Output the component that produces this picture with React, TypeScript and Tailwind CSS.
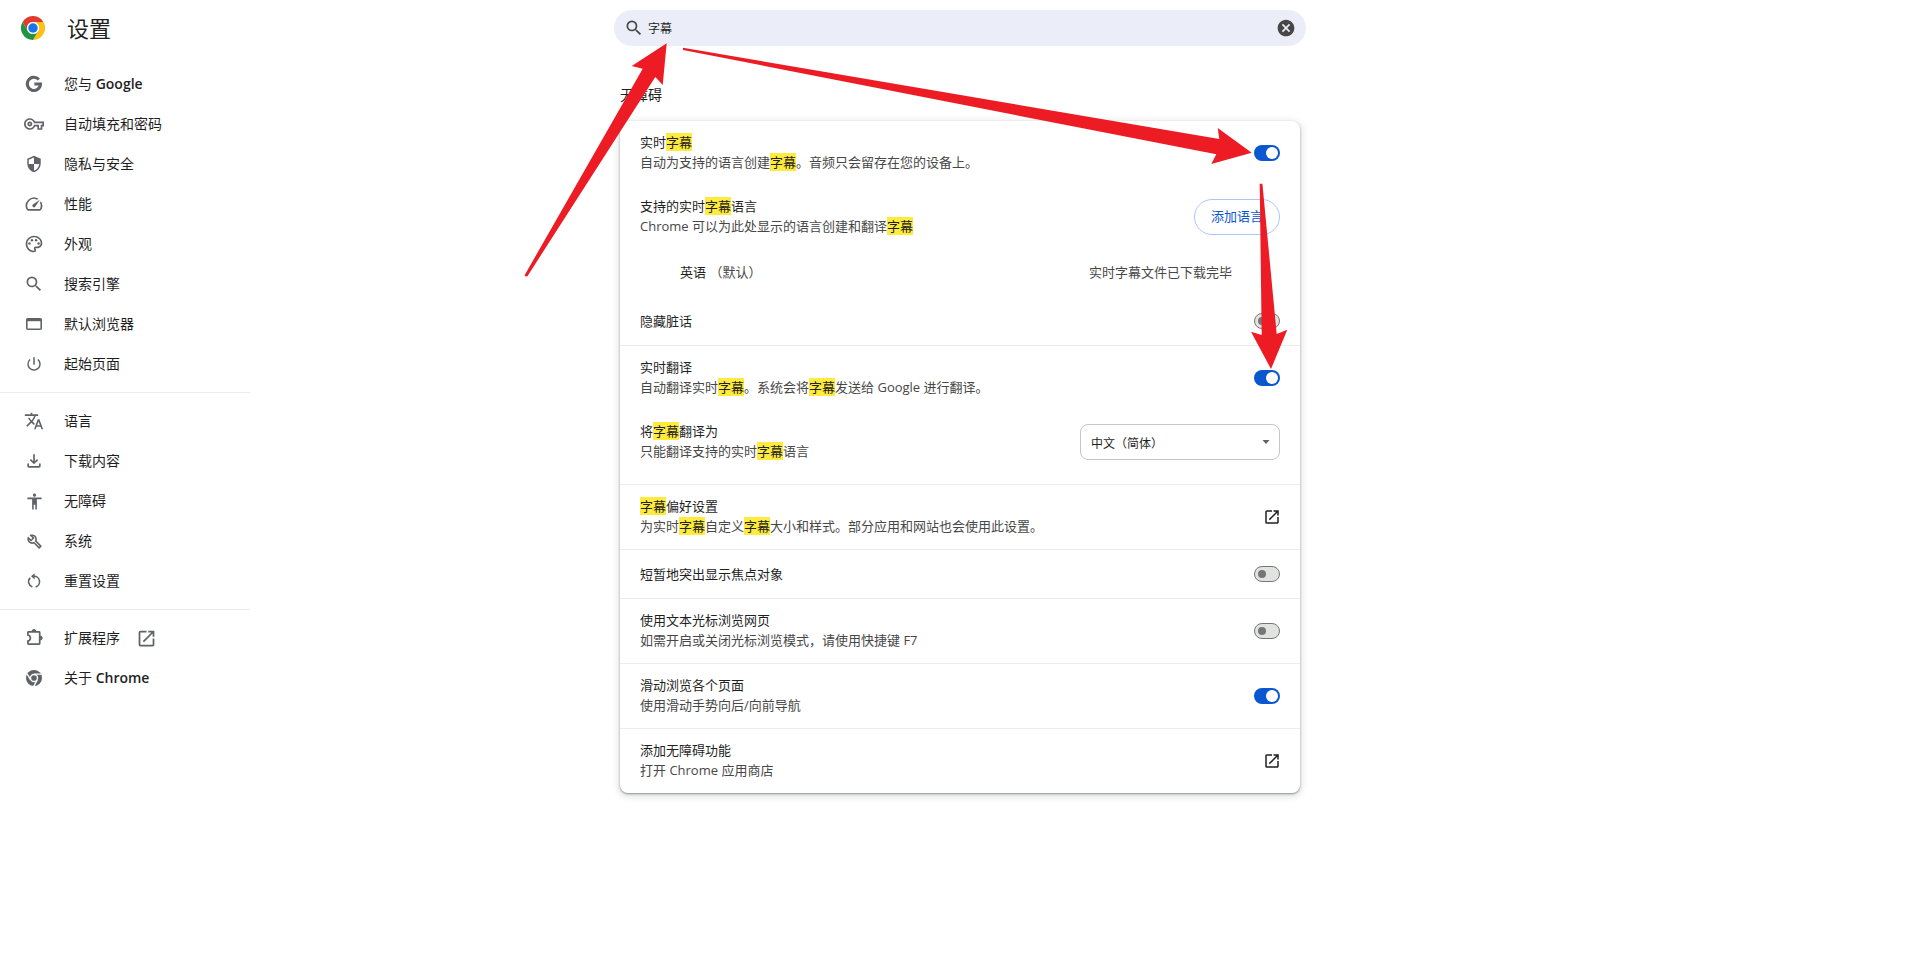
import { Fragment, useState, type ReactNode } from "react";
import {
  MdAccessibility,
  MdCancel,
  MdOpenInNew,
  MdOutlineFileDownload,
  MdOutlinePalette,
  MdOutlineSpeed,
  MdOutlineVpnKey,
  MdPowerSettingsNew,
  MdSearch,
  MdSecurity,
  MdTranslate,
} from "react-icons/md";

const QUERY = "字幕";

/** Highlights every occurrence of the search query. */
function Hit({ text }: { text: string }) {
  const parts = text.split(QUERY);
  return (
    <>
      {parts.map((part, i) => (
        <Fragment key={i}>
          {part}
          {i < parts.length - 1 && (
            <mark className="bg-[#ffeb3b] text-[#202124]">{QUERY}</mark>
          )}
        </Fragment>
      ))}
    </>
  );
}

function ChromeLogo() {
  return (
    <svg viewBox="0 0 48 48" className="size-6 shrink-0" aria-hidden="true">
      <path d="M24 12h20.8A24 24 0 0 0 3.2 12l10.4 18A12 12 0 0 1 24 12z" fill="#e33b2e" />
      <path d="M34.4 30L24 48A24 24 0 0 0 44.8 12H24a12 12 0 0 1 10.4 18z" fill="#fbc116" />
      <path d="M13.6 30L3.2 12A24 24 0 0 0 24 48l10.4-18a12 12 0 0 1-20.8 0z" fill="#229342" />
      <circle cx="24" cy="24" r="12" fill="#fff" />
      <circle cx="24" cy="24" r="9.5" fill="#1a73e8" />
    </svg>
  );
}

function GoogleIcon() {
  return (
    <svg viewBox="0 0 20 20" className="size-5" fill="none" stroke="currentColor" strokeWidth="3" aria-hidden="true">
      <path d="M14.9 5.6A6.6 6.6 0 1 0 16.5 10.1H10.4" />
    </svg>
  );
}

function WindowIcon() {
  return (
    <svg viewBox="0 0 20 20" className="size-5" aria-hidden="true">
      <rect x="2.8" y="4.8" width="14.4" height="10.4" rx="1" fill="none" stroke="currentColor" strokeWidth="1.6" />
      <path d="M2.8 4.8h14.4v2.4H2.8z" fill="currentColor" />
    </svg>
  );
}

function WrenchIcon() {
  return (
    <svg viewBox="0 -960 960 960" className="size-[19px]" fill="currentColor" aria-hidden="true">
      <path d="M686-132 444-376q-20 8-40.5 12t-43.5 4q-100 0-170-70t-70-170q0-36 10-68.5t28-61.5l146 146 72-72-146-146q29-18 61.5-28t68.5-10q100 0 170 70t70 170q0 23-4 43.5T584-516l244 242q12 12 12 29t-12 29l-84 84q-12 12-29 12t-29-12Zm29-85 27-27-256-256q18-20 26-46.5t8-53.5q0-60-38.5-104.5T386-758l74 74q12 12 12 28t-12 28L332-500q-12 12-28 12t-28-12l-74-74q9 57 53.5 95.5T360-440q26 0 53-8t47-25l255 256Z" />
    </svg>
  );
}

function ResetIcon() {
  return (
    <svg viewBox="0 0 20 20" className="size-5" aria-hidden="true">
      <path
        d="M8.4 15.9A5.4 5.4 0 0 1 6.2 6.9M11.6 15.9A5.4 5.4 0 0 0 10 5.3H8.6"
        fill="none"
        stroke="currentColor"
        strokeWidth="1.6"
      />
      <path d="M10.6 2.2v6.2L7 5.3z" fill="currentColor" />
    </svg>
  );
}

function PuzzleIcon() {
  return (
    <svg viewBox="0 0 20 20" className="size-5" aria-hidden="true">
      <path
        d="M3.9 7V4.4q0-.6.6-.6h10.6q.6 0 .6.6v11.2q0 .6-.6.6H4.5q-.6 0-.6-.6V13a3.05 3.05 0 0 0 0-6z"
        fill="none"
        stroke="currentColor"
        strokeWidth="1.7"
      />
      <path d="M8 3.4a1.9 1.9 0 0 1 3.8 0zM16.2 8a2 2 0 0 1 0 4z" fill="currentColor" stroke="currentColor" />
    </svg>
  );
}

function ChromeIcon() {
  return (
    <svg viewBox="0 0 48 48" className="size-4" aria-hidden="true">
      <circle cx="24" cy="24" r="24" fill="currentColor" />
      <path d="M24 12.5h21M34 29.7L23.5 48M14 29.7L3.4 11.5" stroke="#fff" strokeWidth="4" />
      <circle cx="24" cy="24" r="12.5" fill="#fff" />
      <circle cx="24" cy="24" r="8.5" fill="currentColor" />
    </svg>
  );
}

type NavItem = { icon: ReactNode; label: ReactNode; external?: boolean };

const latin = "font-semibold";

const navGroups: NavItem[][] = [
  [
    { icon: <GoogleIcon />, label: <>您与 <span className={latin}>Google</span></> },
    { icon: <MdOutlineVpnKey className="size-5" />, label: "自动填充和密码" },
    { icon: <MdSecurity className="size-[18px]" />, label: "隐私与安全" },
    { icon: <MdOutlineSpeed className="size-5" />, label: "性能" },
    { icon: <MdOutlinePalette className="size-5" />, label: "外观" },
    { icon: <MdSearch className="size-5" />, label: "搜索引擎" },
    { icon: <WindowIcon />, label: "默认浏览器" },
    { icon: <MdPowerSettingsNew className="size-[18px]" />, label: "起始页面" },
  ],
  [
    { icon: <MdTranslate className="size-5" />, label: "语言" },
    { icon: <MdOutlineFileDownload className="size-5" />, label: "下载内容" },
    { icon: <MdAccessibility className="size-[19px]" />, label: "无障碍" },
    { icon: <WrenchIcon />, label: "系统" },
    { icon: <ResetIcon />, label: "重置设置" },
  ],
  [
    { icon: <PuzzleIcon />, label: "扩展程序", external: true },
    { icon: <ChromeIcon />, label: <>关于 <span className={latin}>Chrome</span></> },
  ],
];

function Sidebar() {
  return (
    <nav aria-label="设置" className="w-[250px] shrink-0 pt-2">
      {navGroups.map((group, g) => (
        <ul key={g} className={g > 0 ? "mt-2 border-t border-[#e8eaed] pt-2" : ""}>
          {group.map((item, i) => (
            <li key={i}>
              <a href="#" className="flex h-10 items-center pl-6 text-sm">
                <span className="flex size-5 items-center justify-center text-[#5f6368]">{item.icon}</span>
                <span className="ml-5">{item.label}</span>
                {item.external && <MdOpenInNew className="ml-4 size-[21px] text-[#5f6368]" aria-hidden="true" />}
              </a>
            </li>
          ))}
        </ul>
      ))}
    </nav>
  );
}

function Toggle({ label, initial = false }: { label: string; initial?: boolean }) {
  const [on, setOn] = useState(initial);
  return (
    <label className="flex">
      <input
        type="checkbox"
        role="switch"
        aria-label={label}
        checked={on}
        onChange={() => setOn(!on)}
        className="peer sr-only"
      />
      <span
        className={
          on
            ? "flex h-4 w-[26px] items-center justify-end rounded-full bg-[#0b57d0] px-0.5"
            : "flex h-4 w-[26px] items-center rounded-full border border-[#747775] bg-[#e1e3e1] px-[3px]"
        }
      >
        <span className={on ? "size-3 rounded-full bg-white" : "size-2 rounded-full bg-[#747775]"} />
      </span>
    </label>
  );
}

function External({ label }: { label: string }) {
  return (
    <a href="#" aria-label={label} className="-mr-0.5 flex size-5 items-center justify-center text-[#1f1f1f]">
      <MdOpenInNew className="size-[18px]" />
    </a>
  );
}

function Row({ title, sub, children }: { title: string; sub?: string; children: ReactNode }) {
  return (
    <div className={sub ? "flex h-16 items-center justify-between px-5" : "flex h-12 items-center justify-between px-5"}>
      <div className={sub ? "pb-0.5 leading-5" : "leading-5"}>
        <div>
          <Hit text={title} />
        </div>
        {sub && (
          <div className="text-[#474747]">
            <Hit text={sub} />
          </div>
        )}
      </div>
      {children}
    </div>
  );
}

function Arrows() {
  return (
    <svg
      className="pointer-events-none absolute top-0 left-0 size-full overflow-visible"
      fill="#ed1c24"
      aria-hidden="true"
    >
      <g transform="translate(-614 0)">
        <path d="M666.7 43.2L631.7 66l11 2.8L524.6 275.2q1 2 2.8 1L655.3 77l7.4 8z" />
        <path d="M683 47.8L1219.3 139l-1.6-11 34 24.8-40.4 11.2 5-9.7L683 50z" />
        <path d="M1259.7 183.8L1261.7 335l-10.7-3.3 20 37.2 16.3-39.2-10.6 4.3L1262.4 183.8z" />
      </g>
    </svg>
  );
}

export default function App() {
  const [query, setQuery] = useState(QUERY);
  return (
    <div className="grid min-h-screen grid-cols-[1fr_692px_1fr] bg-white font-['Open_Sans','Noto_Sans_CJK_SC',sans-serif] text-[13px] text-[#1f1f1f]">
      <div>
        <header className="flex h-14 items-center gap-[22px] pl-[21px]">
          <ChromeLogo />
          <h1 className="text-[22px] leading-8">设置</h1>
        </header>
        <Sidebar />
      </div>

      <main className="relative">
        <div className="flex h-14 items-center">
          <div className="flex h-9 w-full items-center rounded-full bg-[#ebeef8] px-[10px]">
            <MdSearch className="size-5 text-[#474747]" aria-hidden="true" />
            <input
              aria-label="在设置中搜索"
              value={query}
              onChange={(e) => setQuery(e.target.value)}
              className="ml-1 flex-1 bg-transparent pt-0.5 text-xs outline-none"
            />
            <button type="button" aria-label="清除搜索" onClick={() => setQuery("")} className="text-[#474747]">
              <MdCancel className="size-5" />
            </button>
          </div>
        </div>

        <div className="px-1.5">
          <h2 className="mt-[29px] text-sm leading-5">无障碍</h2>
          <section className="mt-4 rounded-lg bg-white shadow-[0_1px_2px_rgba(60,64,67,0.5),0_2px_6px_2px_rgba(60,64,67,0.15)]">
            <Row title="实时字幕" sub="自动为支持的语言创建字幕。音频只会留存在您的设备上。">
              <Toggle label="实时字幕" initial />
            </Row>
            <Row title="支持的实时字幕语言" sub="Chrome 可以为此处显示的语言创建和翻译字幕">
              <button
                type="button"
                className="h-9 rounded-full border border-[#a8c7fa] px-4 text-[#0b57d0]"
              >
                添加语言
              </button>
            </Row>
            <div className="flex h-12 items-center justify-between pr-[68px] pl-[60px]">
              <div>
                英语 <span className="text-[#474747]">（默认）</span>
              </div>
              <div className="text-[#474747]">实时字幕文件已下载完毕</div>
            </div>
            <Row title="隐藏脏话">
              <Toggle label="隐藏脏话" />
            </Row>
            <div className="border-t border-[#ececec] pb-[10px]">
              <Row title="实时翻译" sub="自动翻译实时字幕。系统会将字幕发送给 Google 进行翻译。">
                <Toggle label="实时翻译" initial />
              </Row>
              <Row title="将字幕翻译为" sub="只能翻译支持的实时字幕语言">
                <div className="relative">
                  <select
                    aria-label="将字幕翻译为"
                    className="h-9 w-[200px] appearance-none rounded-lg border border-[#c4c7c5] bg-white pt-[3px] pr-8 pl-[10px] text-xs"
                  >
                    <option>中文（简体）</option>
                    <option>English</option>
                  </select>
                  <svg
                    viewBox="0 0 8 4"
                    className="pointer-events-none absolute top-4 right-[10px] h-1 w-2"
                    fill="#5f6368"
                    aria-hidden="true"
                  >
                    <path d="M0.5 0h7L4 4z" />
                  </svg>
                </div>
              </Row>
            </div>
            <div className="border-t border-[#ececec]">
              <Row title="字幕偏好设置" sub="为实时字幕自定义字幕大小和样式。部分应用和网站也会使用此设置。">
                <External label="字幕偏好设置" />
              </Row>
            </div>
            <div className="border-t border-[#ececec]">
              <Row title="短暂地突出显示焦点对象">
                <Toggle label="短暂地突出显示焦点对象" />
              </Row>
            </div>
            <div className="border-t border-[#ececec]">
              <Row title="使用文本光标浏览网页" sub="如需开启或关闭光标浏览模式，请使用快捷键 F7">
                <Toggle label="使用文本光标浏览网页" />
              </Row>
            </div>
            <div className="border-t border-[#ececec]">
              <Row title="滑动浏览各个页面" sub="使用滑动手势向后/向前导航">
                <Toggle label="滑动浏览各个页面" initial />
              </Row>
            </div>
            <div className="border-t border-[#ececec]">
              <Row title="添加无障碍功能" sub="打开 Chrome 应用商店">
                <External label="添加无障碍功能" />
              </Row>
            </div>
          </section>
        </div>
        <Arrows />
      </main>
    </div>
  );
}
